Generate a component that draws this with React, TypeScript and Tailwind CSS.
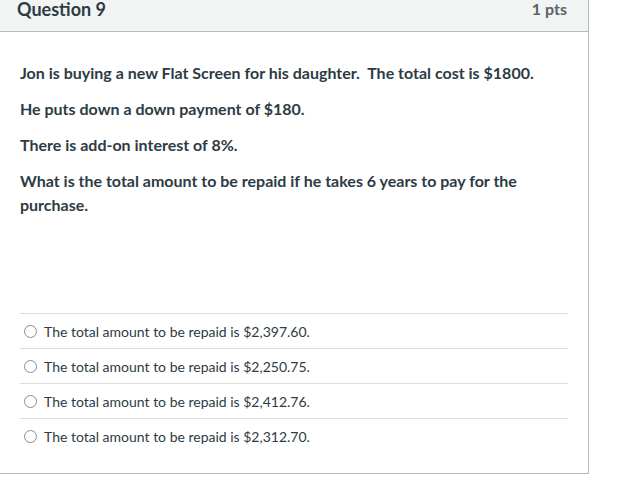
const ANSWERS = [
  'The total amount to be repaid is $2,397.60.',
  'The total amount to be repaid is $2,250.75.',
  'The total amount to be repaid is $2,412.76.',
  'The total amount to be repaid is $2,312.70.',
]

export default function App() {
  return (
    <div className="min-h-[479px] bg-white font-['Lato',sans-serif] text-[#2d3b45] overflow-hidden">
      <div className="-ml-px -mt-[14px] w-[590px] border border-[#b4b9bd]">
        {/* header */}
        <div className="flex h-[45px] items-center justify-between border-b border-[#b4b9bd] bg-[#f2f3f3] pl-[17px] pr-[21px]">
          <span className="text-[18px] font-bold">Question 9</span>
          <span className="text-[16px] font-bold text-[#59636b]">1 pts</span>
        </div>

        {/* body */}
        <div className="px-5 pt-[29px] pb-5">
          <div className="space-y-3 text-[16px] font-bold leading-6">
            <p>Jon is buying a new Flat Screen for his daughter.&nbsp; The total cost is $1800.</p>
            <p>He puts down a down payment of $180.</p>
            <p>There is add-on interest of 8%.</p>
            <p>What is the total amount to be repaid if he takes 6 years to pay for the purchase.</p>
          </div>

          <div className="mt-[96px]">
            {ANSWERS.map((a) => (
              <label
                key={a}
                className="flex h-[35px] items-center border-t border-[#dcdedf] text-[14px]"
              >
                <span className="ml-[4px] mr-[7px] h-[13px] w-[13px] shrink-0 rounded-full border border-[#8c8c8c] bg-white" />
                <span>{a}</span>
              </label>
            ))}
          </div>
        </div>
      </div>
    </div>
  )
}
